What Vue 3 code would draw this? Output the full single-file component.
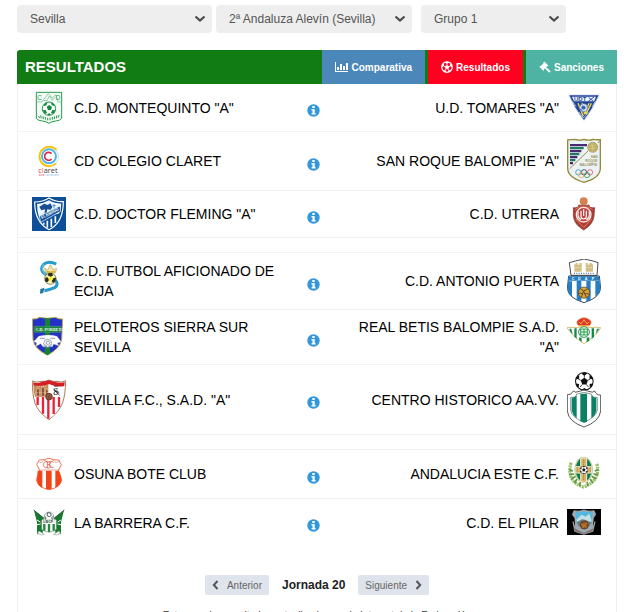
<script setup>
import { ref } from 'vue'

const province = ref('Sevilla')
const category = ref('2ª Andaluza Alevín (Sevilla)')
const group = ref('Grupo 1')

// h: height of the crest area; a gap entry is an empty spacer row.
const rows = [
  { home: 'C.D. MONTEQUINTO "A"', away: 'U.D. TOMARES "A"', hl: 'montequinto', al: 'tomares', h: 35 },
  { home: 'CD COLEGIO CLARET', away: 'SAN ROQUE BALOMPIE "A"', hl: 'claret', al: 'sanroque', h: 46 },
  { home: 'C.D. DOCTOR FLEMING "A"', away: 'C.D. UTRERA', hl: 'fleming', al: 'utrera', h: 34 },
  { gap: true },
  { home: 'C.D. FUTBOL AFICIONADO DE ECIJA', away: 'C.D. ANTONIO PUERTA', hl: 'ecija', al: 'puerta', h: 44 },
  { home: 'PELOTEROS SIERRA SUR SEVILLA', away: 'REAL BETIS BALOMPIE S.A.D. "A"', hl: 'peloteros', al: 'betis', h: 42 },
  { home: 'SEVILLA F.C., S.A.D. "A"', away: 'CENTRO HISTORICO AA.VV.', hl: 'sevilla', al: 'centro', h: 57 },
  { gap: true },
  { home: 'OSUNA BOTE CLUB', away: 'ANDALUCIA ESTE C.F.', hl: 'osuna', al: 'andalucia', h: 36 },
  { home: 'LA BARRERA C.F.', away: 'C.D. EL PILAR', hl: 'barrera', al: 'pilar', h: 35 },
]
</script>

<template>
  <svg class="defs" aria-hidden="true">
    <symbol id="chevron" viewBox="0 0 12 8"><path d="M1.500 1.500 6 5.500l4.500-4" fill="none" stroke="#4b4b4b" stroke-width="2.200" /></symbol>
    <symbol id="ball" viewBox="0 0 36 36">
      <circle cx="18" cy="18" r="17" fill="#fff" stroke="#111" stroke-width="2" />
      <path d="M18 11l7 5-3 8h-8l-3-8zM12 3l6 4 6-4-6-2zM2 14l6-1 0-7-5 4zM34 14l-6-1 0-7 5 4zM7 30l1-7-6-1 1 6zM29 30l-1-7 6-1-1 6zM13 34l5-3 5 3-5 1z" fill="#111" />
      <path d="M18 11V6M25 16l5-3M22 24l4 5M14 24l-4 5M11 16l-5-3" stroke="#111" stroke-width="1.500" />
    </symbol>

    <symbol id="montequinto" viewBox="45 18 102 105">
      <path d="M58 25h76v78q-4 7-18 8-12 1-20 7-8-6-20-7-14-1-18-8z" fill="#f4fbf6" stroke="#239b4b" stroke-width="3" />
      <path d="M59 54h15l20-25 12 14 10-11 7 22h10M80 49l10 1 7-14 9 13 9-9" fill="none" stroke="#5cb87b" stroke-width="2" />
      <text x="61" y="47" font-size="19" font-family="Liberation Sans" fill="#239b4b">C</text>
      <text x="116" y="47" font-size="19" font-family="Liberation Sans" fill="#239b4b">D</text>
      <circle cx="96" cy="74" r="20" fill="#fff" stroke="#1d9746" stroke-width="3" />
      <path d="M89 68l8-5 8 6-3 9h-9zM82 60l9-6-2 9-8 4zM111 60l-9-6 2 9 9 4zM77 79l9-1 4 9-6 3zM115 79l-9-1-4 9 7 3zM91 93l5-6 6 6z" fill="#118a3a" />
      <path d="M64 96l5 6M71 94l2 9M78 97l1 8M85 99v8M92 101v8M99 101v8M106 99v8M113 97l-1 8M120 94l-2 9M127 93l-4 8" stroke="#239b4b" stroke-width="3" />
    </symbol>

    <symbol id="claret" viewBox="45 162 102 138">
      <path d="M117 238A29 29 0 1 1 118 198" fill="none" stroke="#f9c40f" stroke-width="6" />
      <path d="M116 196q16 20 2 41" fill="none" stroke="#b9c9dc" stroke-width="2" />
      <circle cx="96" cy="217" r="21" fill="none" stroke="#4db6ea" stroke-width="6" />
      <path d="M104 209a12 12 0 1 0 0 16" fill="none" stroke="#d92c4c" stroke-width="5" />
      <text x="64" y="267" font-size="22" font-family="Open Sans" fill="#3f3b43"><tspan fill="#d9304e">c</tspan><tspan fill="#e27c39">l</tspan>aret</text>
      <path d="M66 273h17" stroke="#e84b62" stroke-width="3" stroke-dasharray="3 1" /><path d="M86 273h40" stroke="#8bbbe0" stroke-width="3" stroke-dasharray="3 1" />
    </symbol>

    <symbol id="fleming" viewBox="45 339 102 102">
      <path d="M45 339h102v102H45z" fill="#0d4f99" />
      <path d="M53 354q24 0 43-12 19 12 43 11 0 63-43 84-43-22-43-83z" fill="#0d4f99" stroke="#fff" stroke-width="3.500" />
      <path d="M60 360q18-1 36-11 17 10 37 10-2 22-8 30L66 400q-6-19-6-40z" fill="#edf5ff" />
      <path d="M67 368l15-9 10 4 8-5 6 11-5 8-10-1-4 19-5-3 2-16-11 3z" fill="#164f91" />
      <path d="M111 360v13M106 365h10" stroke="#2662a6" stroke-width="2" />
      <path d="M67 397l62-31 2 16-60 33z" fill="#0e529d" stroke="#fff" stroke-width="2" />
      <text x="75" y="406" font-size="13" font-weight="700" font-family="Liberation Sans" fill="#fff" transform="rotate(-28 75 406)">FLEMING</text>
      <path d="M80 416v6M91 410v21M103 404v25M115 397v20" stroke="#fff" stroke-width="5" />
    </symbol>

    <symbol id="ecija" viewBox="45 27 102 132">
      <path d="M118 42q-25-11-39 2-9 10-2 22 8 9 23 15 17 7 20 18 1 9-7 14-16 7-31 9" fill="none" stroke="#279ac9" stroke-width="9" />
      <path d="M80 42q-13 21 13 38" fill="none" stroke="#a2d8ec" stroke-width="2" />
      <path d="M70 117l12-4-3 16-10 2z" fill="#237aa6" />
      <path d="M85 68l-2-14 9 6 8-16 8 15 11-4-4 14z" fill="#f4e5a6" stroke="#b4a566" stroke-width="2" />
      <circle cx="100" cy="86" r="17" fill="#f6f1b4" stroke="#56511b" stroke-width="2" />
      <path d="M95 69h10l3 8-8 3-8-4zM85 83l7-1 4 8-5 7-7-3zM110 84l7-1-2 11-7 5-4-6z" fill="#292917" />
      <circle cx="101" cy="86" r="6" fill="#ffef24" />
      <path d="M88 64q12 5 26 0" fill="none" stroke="#d2ad21" stroke-width="4" />
    </symbol>

    <symbol id="peloteros" viewBox="45 198 102 126">
      <path d="M46 207q14 1 22-5l23 3 24-3q10 6 22 5l-3 62q-5 28-43 46-39-18-43-46z" fill="#2431c8" stroke="#b9ad48" stroke-width="3" />
      <path d="M84 205h15v107l-8 3-8-4z" fill="#14842f" />
      <path d="M52 229h79v18H52z" fill="#16873a" stroke="#8eb681" />
      <text x="56" y="243" font-size="12" font-weight="700" font-family="Liberation Serif" fill="#fff">C.D. PORRETAS</text>
      <path d="M65 259q29-8 55 0l13 17-12 3 5 9-16-6-4 8H78l-7-9-14 8 2-11-9-3z" fill="#fff" stroke="#b4b6d0" />
      <circle cx="92" cy="280" r="12" fill="#fff" stroke="#727b92" stroke-width="2" />
      <path d="M89 274h7l3 5-6 5-6-4zM83 285l5 1 2 6M101 284l-5 3v5M69 265h15M100 265h15" stroke="#65718d" stroke-width="2" fill="none" />
    </symbol>

    <symbol id="sevilla" viewBox="45 363 102 171">
      <path d="M46 393q14 6 26 1 17 2 24-4 11 6 24 4 14 5 26-2-1 43-9 66-10 28-41 51-31-21-42-49-8-25-8-67z" fill="#fff" stroke="#a77b55" stroke-width="3" />
      <path d="M49 398q16 4 28-1l17-4v47H54q-5-15-5-42z" fill="#c78b59" />
      <path d="M49 397q13 4 24-1l22-5 20 5q18 5 28 0l-1 12q-22 5-46-6-26 10-46 4z" fill="#d51e25" />
      <path d="M58 438v-17l5-8 5 8v15M73 437v-20l5-9 5 9v20M85 438v-16l4-7 4 7" fill="#8b4d35" stroke="#efcfab" stroke-width="2" />
      <path d="M60 409h30M55 428h37" stroke="#f4dfbd" stroke-width="2" stroke-dasharray="3 3" />
      <path d="M97 441h41q-5 25-20 45-10 15-22 22-16-14-25-27-13-20-16-40z" fill="#fff" />
      <path d="M62 441v24M78 441v50M94 441v65M110 441v51M126 441v30" stroke="#ed2038" stroke-width="7" />
      <text x="109" y="435" font-size="28" font-family="Liberation Serif" fill="#222">S</text>
      <path d="M109 416l19 21M112 410l14-3M110 432q8-23 16-1" fill="none" stroke="#222" stroke-width="2" />
      <circle cx="96" cy="440" r="10" fill="#965b3d" stroke="#3c251f" stroke-width="2" /><path d="M88 437l14 8M92 447l7-14" stroke="#402d24" />
    </symbol>

    <symbol id="osuna" viewBox="45 78 102 108">
      <path d="M59 103l8-13 15-1 14-4 14 4 15 1 8 14-9 17 10 29q-3 23-38 29-35-7-38-30l10-28z" fill="#fff" stroke="#ee5831" stroke-width="2.500" />
      <path d="M62 122h14v52q-16-8-16-24zM87 122h17v56H87zM115 122h10q9 16 8 29-3 16-18 22z" fill="#f24417" />
      <path d="M64 120h64M66 95q5 8 15-4 15 9 29 0 8 11 17 2" fill="none" stroke="#d98170" stroke-width="2" />
      <path d="M92 97a8 9 0 1 0 0 14M110 97a8 9 0 1 0 0 14M91 95v19M91 96h7q6 4 0 8h-7M98 104q8 5 0 10h-7" fill="none" stroke="#dc4532" stroke-width="2" />
    </symbol>

    <symbol id="barrera" viewBox="45 225 102 105">
      <path d="M51 241l29 22-3 46-17 4 0-36zM141 241l-29 22 3 46 17 4 0-36z" fill="#167a2d" />
      <path d="M50 240l32 26M142 240l-32 26" stroke="#3b5842" stroke-width="3" />
      <path d="M60 270l10 6M60 284l11-2M132 270l-10 6M132 284l-11-2" stroke="#fff" stroke-width="3" />
      <circle cx="96" cy="260" r="14" fill="#fff" stroke="#819689" stroke-width="2" />
      <path d="M92 248l8 1 3 7-6 4-7-3zM82 258l5 5-2 7M110 258l-6 5 3 7" fill="none" stroke="#4e5f57" stroke-width="3" />
      <path d="M74 270h44v28q-22 17-44 0z" fill="#fff" stroke="#70907a" stroke-width="2" />
      <path d="M82 282v20M96 282v24M110 282v20" stroke="#248640" stroke-width="7" />
      <path d="M75 269h42v11H75z" fill="#e9f2e9" /><text x="79" y="279" font-size="11" font-weight="700" font-family="Liberation Sans" fill="#334f3c">LBCF</text>
      <path d="M66 303l16 10-8 2-13-5zM126 303l-16 10 8 2 13-5z" fill="#fff" stroke="#879d8c" stroke-width="2" />
    </symbol>

    <symbol id="tomares" viewBox="231 18 102 105">
      <path d="M237 33h90q-17 39-45 76-29-37-45-76z" fill="#1e4398" stroke="#b5c5e2" stroke-width="2" />
      <path d="M246 38h72l-6 14h-60z" fill="#eef4fc" />
      <text x="252" y="52" font-size="18" font-weight="700" font-family="Liberation Sans" fill="#294e9c">UDT</text><path d="M296 40l14 12M312 39l-17 13" stroke="#294e9c" stroke-width="3" />
      <path d="M264 58l16 39M276 57l8 34M297 58l-13 32M304 58l-16 33" stroke="#f5dd45" stroke-width="4" />
      <circle cx="281" cy="71" r="12" fill="#e6edfa" stroke="#4468ad" stroke-width="2" />
      <path d="M277 65l7 1 3 7-6 4-7-5zM269 75l6 1 3 6M292 67l-5 4" fill="#3861a7" stroke="#3861a7" />
      <path d="M247 52l11 15M316 52l-10 17M267 84l14 18 14-18" fill="none" stroke="#ecf3ff" stroke-width="2" />
    </symbol>

    <symbol id="sanroque" viewBox="231 162 102 138">
      <path d="M233 168q12-1 22-2 14 5 27 0 14 5 27 0 12 2 22 1v88q-2 27-49 40-49-14-49-42z" fill="#eaf2f6" stroke="#978a3a" stroke-width="4" />
      <path d="M240 180h51v7h-51zM240 198h34v7h-34zM240 216h22v7h-22zM240 234h9v7h-9z" fill="#4a2a6e" />
      <path d="M240 189h41v7h-41zM240 207h28v7h-28zM240 225h16v7h-16z" fill="#1f7a60" />
      <path d="M239 254l56-54M324 177l6-7" stroke="#a08f48" stroke-width="3" />
      <circle cx="308" cy="190" r="15" fill="#bcac64" stroke="#a08f43" stroke-width="2" />
      <path d="M295 187l25-4M294 194l28-3M302 177l12 25M309 175l-3 29" stroke="#f0e8bd" />
      <g font-family="Liberation Sans" font-size="10" font-weight="700" fill="#9d9454"><text x="302" y="223">SAN</text><text x="286" y="235">ROQUE</text><text x="269" y="247">BALOMPIE</text></g>
      <g fill="none" stroke-width="2.500"><circle cx="265" cy="265" r="8" stroke="#4790bf" /><circle cx="282" cy="265" r="8" stroke="#353c42" /><circle cx="300" cy="265" r="8" stroke="#df5662" /><circle cx="274" cy="273" r="8" stroke="#e0ae48" /><circle cx="291" cy="273" r="8" stroke="#43956b" /></g>
    </symbol>

    <symbol id="utrera" viewBox="231 339 102 102">
      <circle cx="281" cy="352" r="12" fill="#d38250" />
      <path d="M250 371q15 2 16-8 15 3 31 0 1 10 17 8l-2 26q-3 25-31 41-28-16-31-41z" fill="#a93c39" stroke="#7c3333" stroke-width="2" />
      <path d="M255 377l12-8h28l13 8M257 405l24 25 24-25" fill="none" stroke="#ea7b4f" stroke-width="3" />
      <circle cx="281" cy="392" r="22" fill="#bd4140" stroke="#f7e8dd" stroke-width="4" />
      <path d="M273 380v16q0 9 8 9t8-9v-16M265 382q-5 17 8 25M297 382q5 17-8 25M281 376v20" fill="none" stroke="#fff" stroke-width="3.500" />
    </symbol>

    <symbol id="puerta" viewBox="231 27 102 132">
      <path d="M238 38l18-5 26-6 27 6 15 5-3 38H243z" fill="#fff" stroke="#262626" stroke-width="2.500" />
      <path d="M257 39h6v5h5v-5h7v26h-22V43h4zM287 39h6v5h5v-5h7v4h4v22h-22z" fill="#d3bd83" />
      <path d="M254 53h19M288 53h19" stroke="#fff5d8" stroke-width="2" stroke-dasharray="3 2" />
      <path d="M252 70h61" stroke="#587cab" stroke-width="4" stroke-dasharray="3 4" />
      <path d="M236 78h92l4 37q-3 29-50 43-48-14-50-43z" fill="#fff" stroke="#1e2630" stroke-width="2.500" />
      <path d="M236 79h91v13h-93zM234 94h12v48q-13-11-13-28zM260 93h14v61l-14-5zM289 93h13v57l-13 5zM316 93h13l2 22q-2 16-15 26z" fill="#257fc5" />
      <g font-size="11" font-weight="700" font-family="Liberation Sans" fill="#fff"><text x="245" y="90">C</text><text x="264" y="90">D</text><text x="284" y="90">A</text><text x="305" y="90">P</text></g>
      <circle cx="282" cy="128" r="17" fill="#d8a43a" stroke="#4e371c" stroke-width="2" />
      <path d="M272 117l9 6 12-6M266 129l12 2 3-8M298 132l-14-1-3-8M278 131l-4 11M284 131l5 11" fill="none" stroke="#4e371c" stroke-width="2.500" />
    </symbol>

    <symbol id="betis" viewBox="231 198 102 126">
      <path d="M231 233q14-2 24 0 27-6 54 0 10-3 23 0-10 22-50 48-38-25-51-48z" fill="#fff" stroke="#c7a03c" stroke-width="2" />
      <path d="M238 236h6l4 17-8-9zM253 235h7v31l-7-6zM305 235h7v26l-7 6zM321 236h7l-11 17zM267 262l8 1v13l-7-5zM290 263l8-1v10l-8 5z" fill="#168b48" />
      <circle cx="282" cy="246" r="16" fill="#fff" stroke="#288d51" stroke-width="3" />
      <path d="M272 237h20v18h-20zM273 246h18M282 237v18" fill="#e4f0dd" stroke="#29a255" stroke-width="3" />
      <path d="M266 227q-12-12 2-19 6-4 14-5 9 1 14 5 14 7 2 19z" fill="#df3131" stroke="#d29c36" stroke-width="2" />
      <path d="M266 215l7 7 9-13 9 13 7-7M266 227h33" fill="none" stroke="#e9b63d" stroke-width="3" />
    </symbol>

    <symbol id="centro" viewBox="231 363 102 171">
      <use href="#ball" x="254" y="366" width="58" height="56" />
      <path d="M232 434q12 2 18-11 6 6 14 2l18-5 18 5q8 4 14-2 5 13 18 12v48q-4 32-50 48-47-16-50-48z" fill="#fff" stroke="#343936" stroke-width="2.500" />
      <path d="M242 442q16 2 18-10l22-5 22 5q3 12 18 10v38q-5 23-40 36-37-13-40-36z" fill="#fff" stroke="#526d65" stroke-width="2" />
      <path d="M245 444q9 0 15-8v69q-11-9-15-23zM271 431h20v84l-9 3-11-4zM304 435q6 8 15 9v38q-3 14-15 22z" fill="#0b8064" />
    </symbol>

    <symbol id="andalucia" viewBox="231 63 102 108">
      <path d="M243 83q-15 56 37 73 54-19 40-72" fill="none" stroke="#9abf6d" stroke-width="10" stroke-dasharray="6 2" />
      <path d="M237 104l12 4M238 119l15-2M244 132l13-8M254 144l7-12M269 153l2-12M326 104l-12 4M325 119l-15-2M318 132l-13-8M308 144l-7-12M294 153l-3-12" stroke="#5f9746" stroke-width="5" />
      <ellipse cx="281" cy="104" rx="26" ry="37" fill="#087a54" stroke="#bfcf9a" stroke-width="4" />
      <path d="M272 71q9-5 18 0v24h14v19h-14v26q-9 5-18 0v-26h-14V95h14z" fill="#dcb56c" stroke="#f7ecd1" stroke-width="3" />
      <path d="M281 74v16M281 119v18M261 97v15M301 97v15" stroke="#9b7c3e" stroke-width="3" stroke-dasharray="4 2" />
      <use href="#ball" x="269" y="92" width="25" height="25" />
    </symbol>

    <symbol id="pilar" viewBox="231 210 102 105">
      <path d="M231 222h102v78H231z" fill="#020305" />
      <path d="M252 227q14 4 30-2 15 6 30 2l5 11-7 11-3 31-25 17-25-17-2-31-8-10z" fill="#98a9b5" stroke="#c1c7ca" stroke-width="2" />
      <path d="M257 231q12 2 25-2 14 4 25 2l-2 33h-46z" fill="#54b6dc" />
      <path d="M259 254l16-15 11 6 12-9 7 21-7 8h-35z" fill="#c4dfe4" />
      <path d="M260 262l16-9 12 2 17 8-8 11h-31z" fill="#687982" />
      <circle cx="283" cy="270" r="12" fill="#925520" stroke="#442411" stroke-width="2" />
      <path d="M273 267l9 4 10-7M277 279l5-8 7 7" fill="none" stroke="#e19b48" stroke-width="2" />
      <path d="M249 260l7 20 25 12 27-12 7-20-6 29-28 9-27-9z" fill="#756e71" stroke="#c6c1bc" stroke-width="2" />
    </symbol>
  </svg>

  <main class="page">
    <form class="filters" @submit.prevent>
      <div class="field province">
        <select v-model="province" aria-label="Provincia"><option>Sevilla</option></select>
        <svg class="caret"><use href="#chevron" /></svg>
      </div>
      <div class="field category">
        <select v-model="category" aria-label="Categoría"><option>2ª Andaluza Alevín (Sevilla)</option></select>
        <svg class="caret"><use href="#chevron" /></svg>
      </div>
      <div class="field group">
        <select v-model="group" aria-label="Grupo"><option>Grupo 1</option></select>
        <svg class="caret"><use href="#chevron" /></svg>
      </div>
    </form>

    <section class="panel">
      <header class="bar">
        <h1>RESULTADOS</h1>
        <nav class="tabs">
          <a href="#" class="tab compare">
            <svg width="13" height="12" viewBox="0 0 13 12"><path d="M0 1h1v9h12v1H0z" /><path d="M2 6h2v3H2zM5 3h2v6H5zM8 5h2v4H8zM11 2h2v7h-2z" /></svg>
            Comparativa
          </a>
          <a href="#" class="tab results">
            <svg width="12" height="12" viewBox="0 0 24 24"><circle cx="12" cy="12" r="10.500" fill="none" stroke="#fff" stroke-width="2.500" /><path d="M12 8l4.500 3.200-1.700 5.300H9.200l-1.700-5.300zM7 2.500L12 6l5-3.500-5-1.500zM1.500 13l5-3.500L5 4 2 7zM22.500 13l-5-3.500L19 4l3 3zM4 18.500h5.500l1 4.500-4-1zM20 18.500h-5.500l-1 4.500 4-1z" /><path d="M12 5v4M16 11.500l3-1.500M14.500 16l2 3M9.500 16l-2 3M8 11.500L5 10" stroke="#fff" stroke-width="1.500" /></svg>
            Resultados
          </a>
          <a href="#" class="tab sanctions">
            <svg width="12" height="12" viewBox="0 0 12 12"><path d="M5.300.6l4 4-.8.8-.5-.2-1 1 4.600 4-1.400 1.500-4.300-4.400-1 1 .2.6-.8.8-4-4 .8-.8.6.2L4.600 2.200l-.2-.7z" /></svg>
            Sanciones
          </a>
        </nav>
      </header>

      <table class="matches">
        <colgroup><col class="c-crest" /><col class="c-home" /><col class="c-info" /><col class="c-away" /><col class="c-crest-away" /></colgroup>
        <tbody>
          <tr v-for="(m, i) in rows" :key="i" :class="{ gap: m.gap }">
            <td v-if="m.gap" colspan="5"></td>
            <template v-else>
              <td class="crest home-crest"><svg width="34" :height="m.h" aria-hidden="true"><use :href="'#' + m.hl" /></svg></td>
              <td class="name">{{ m.home }}</td>
              <td class="info">
                <a href="#" aria-label="Información del partido">
                  <svg width="13" height="13" viewBox="0 0 13 13"><circle cx="6.500" cy="6.500" r="6.200" fill="#3398db" /><path d="M5.300 2h2.400v2H5.300zM4.500 5h3.200v4.200h1v1.400H4.500V9.200h1V6.400h-1z" fill="#fff" /></svg>
                </a>
              </td>
              <td class="name away">{{ m.away }}</td>
              <td class="crest away-crest"><svg width="34" :height="m.h" aria-hidden="true"><use :href="'#' + m.al" /></svg></td>
            </template>
          </tr>
        </tbody>
      </table>

      <div class="pager">
        <button type="button">
          <svg width="7" height="10" viewBox="0 0 7 10"><path d="M5.500 1 1.800 5l3.700 4" /></svg>
          Anterior
        </button>
        <strong>Jornada 20</strong>
        <button type="button">
          Siguiente
          <svg width="7" height="10" viewBox="0 0 7 10"><path d="M1.500 1l3.700 4-3.700 4" /></svg>
        </button>
      </div>
      <p class="note">Estos son los resultados actualizados por la Intranet de la Federación</p>
    </section>
  </main>
</template>

<style>
body {
  background: #fff;
  overflow: hidden;
}
</style>

<style scoped>
.defs {
  display: none;
}
.page {
  padding: 5px 7px 0 17px;
  font-family: "Liberation Sans", Arial, sans-serif;
  color: #000;
}
.filters {
  display: flex;
}
.field {
  position: relative;
  min-width: 0;
}
.province {
  flex: 0 1 195px;
  margin-right: 4px;
}
.category {
  flex: 0 1 196px;
  margin-right: 9px;
}
.group {
  flex: 0 1 145px;
}
.field select {
  appearance: none;
  display: block;
  width: 100%;
  height: 28px;
  padding: 0 24px 0 13px;
  border: 0;
  border-radius: 4px;
  background: #eee;
  color: #555;
  font: 12px "Liberation Sans", Arial, sans-serif;
}
.caret {
  position: absolute;
  right: 6px;
  top: 10px;
  width: 12px;
  height: 8px;
  pointer-events: none;
}
.panel {
  margin-top: 17px;
}
.bar {
  display: flex;
  align-items: stretch;
  justify-content: space-between;
  height: 34px;
  border-radius: 3px 0 0 0;
  background: #117c13;
}
h1 {
  margin: 0;
  padding-left: 8px;
  font-size: 15px;
  line-height: 34px;
  color: #fff;
}
.tabs {
  display: flex;
  gap: 3px;
}
.tab {
  display: flex;
  align-items: center;
  gap: 3px;
  padding: 0 13px;
  font-size: 10px;
  font-weight: 700;
  color: #fff;
  text-decoration: none;
}
.tab svg {
  fill: #fff;
}
.compare {
  background: #4b87b9;
}
.results {
  background: #ff0021;
}
.sanctions {
  background: #4fb3a3;
}
.matches {
  width: 100%;
  table-layout: fixed;
  border-collapse: separate;
  border-spacing: 0;
  border: solid #eee;
  border-width: 0 1px;
}
.c-crest {
  width: 56px;
}
.c-home {
  width: 38%;
}
.c-info {
  width: 24px;
}
.c-crest-away {
  width: 57px;
}
td {
  padding: 6px 0;
  border-bottom: 1px solid #f0f2f3;
  vertical-align: middle;
}
tr:last-child td {
  border-bottom: 0;
}
.gap td {
  height: 14px;
  padding: 0;
}
.crest svg {
  display: block;
}
.home-crest {
  padding-left: 14px;
}
.away-crest {
  padding-left: 8px;
}
.name {
  padding-right: 14px;
  font-size: 14px;
  line-height: 20px;
}
.away {
  padding-right: 0;
  padding-left: 18px;
  text-align: right;
}
.info {
  padding-top: 12px;
}
.info svg {
  display: block;
  margin: 0 auto;
}
.pager {
  display: flex;
  align-items: center;
  justify-content: center;
  gap: 13px;
  padding-top: 29px;
  border: solid #eee;
  border-width: 0 1px;
}
.pager button {
  display: flex;
  align-items: center;
  gap: 8px;
  height: 20px;
  padding: 0 7px;
  border: 0;
  border-radius: 2px;
  background: #dfe4ec;
  color: #666;
  font: 10px "Liberation Sans", Arial, sans-serif;
}
.pager path {
  fill: none;
  stroke: #555;
  stroke-width: 2;
}
.pager strong {
  font-size: 12px;
  color: #222;
}
.note {
  margin: 0;
  padding-top: 14px;
  border: solid #eee;
  border-width: 0 1px;
  font-size: 10px;
  line-height: 13px;
  text-align: center;
  color: #333;
}
</style>
